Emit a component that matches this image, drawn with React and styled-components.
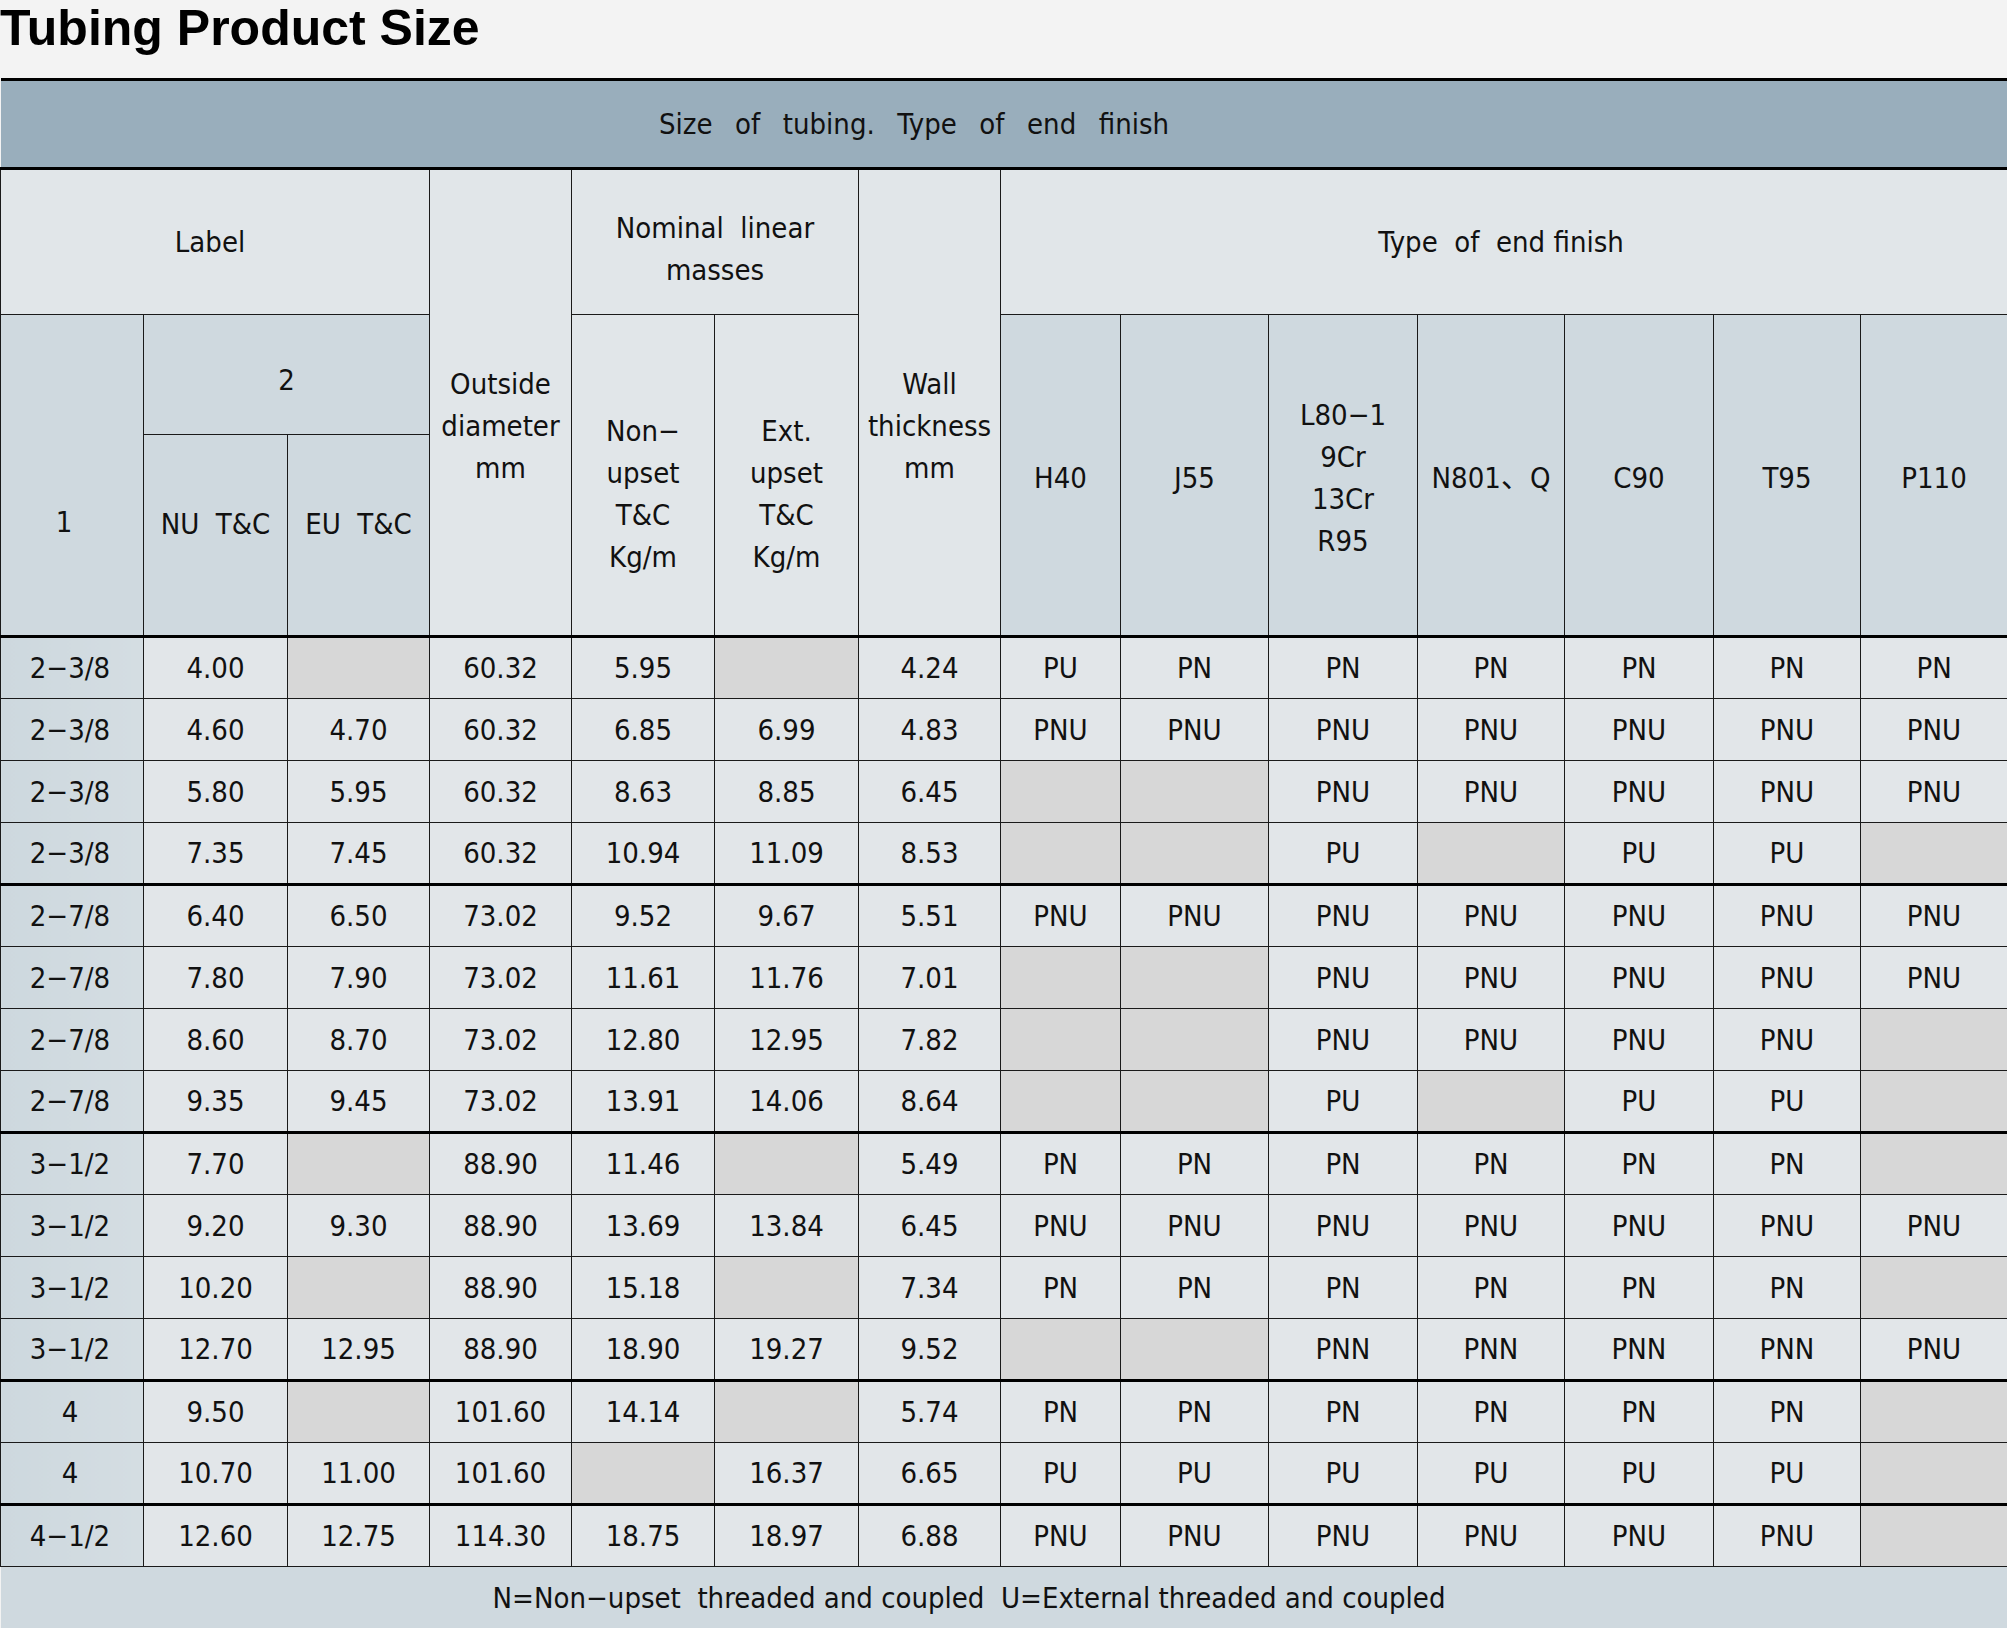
import React from 'react';
import styled, { createGlobalStyle } from 'styled-components';

const GlobalStyle = createGlobalStyle`
  html, body {
    margin: 0;
    padding: 0;
    background: #f3f3f3;
  }
`;

const Page = styled.div`
  width: 2007px;
  font-family: 'Liberation Sans Narrow', 'DejaVu Sans Condensed', 'Liberation Sans', 'Noto Sans CJK SC', sans-serif;
  color: #111;
`;

const Title = styled.h1`
  margin: 0;
  height: 78px;
  padding-top: 3px;
  box-sizing: border-box;
  font-family: 'Liberation Sans Narrow', 'Liberation Sans', sans-serif;
  font-weight: 700;
  font-size: 50px;
  line-height: 51px;
  color: #000;
`;

const Table = styled.table`
  width: 2007px;
  table-layout: fixed;
  border-collapse: collapse;
  font-size: 29px;
  line-height: 42px;
  border-top: 3px solid #000;
`;

const Band = styled.th`
  height: 86px;
  background: #99aebc;
  font-weight: 400;
  white-space: pre;
  word-spacing: 3px;
  padding: 0 180px 0 0;
  border-bottom: 3px solid #000;
`;

const Head = styled.th`
  font-weight: 400;
  white-space: pre;
  padding: ${(p) => p.$pad || '0'};
  vertical-align: ${(p) => p.$valign || 'middle'};
  background: ${(p) => (p.$dark ? '#cfd9df' : '#e1e6e9')};
  border: 1.5px solid #1a1a1a;
  border-bottom: ${(p) => (p.$last ? '3px solid #000' : '1.5px solid #1a1a1a')};
`;

const Row = styled.tr`
  height: 62px;

  td {
    border-bottom: ${(p) => (p.$thick ? '3px solid #000' : '1.5px solid #1a1a1a')};
  }
`;

const Cell = styled.td`
  text-align: center;
  padding: 0;
  border-left: 1.5px solid #1a1a1a;
  border-right: 1.5px solid #1a1a1a;
  background: ${(p) => (p.$empty ? '#d7d7d7' : '#e2e6e9')};
`;

const SizeCell = styled(Cell)`
  padding-right: 4px;
  background: linear-gradient(90deg, #cdd8de 0%, #d4dde2 100%);
`;

const Footer = styled.td`
  height: 62px;
  text-align: center;
  white-space: pre;
  padding: 0 70px 0 0;
  background: #cfd9df;
  border-top: 1.5px solid #1a1a1a;
  border-bottom: 1.5px solid #1a1a1a;
`;

const widths = [143, 144, 142, 142, 143, 144, 142, 120, 148, 149, 147, 149, 147, 147];
const grades = ['H40', 'J55', 'L80−1\n9Cr\n13Cr\nR95', 'N801、Q', 'C90', 'T95', 'P110'];

const rows = [
  ['2−3/8', '4.00', '', '60.32', '5.95', '', '4.24', 'PU', 'PN', 'PN', 'PN', 'PN', 'PN', 'PN'],
  ['2−3/8', '4.60', '4.70', '60.32', '6.85', '6.99', '4.83', 'PNU', 'PNU', 'PNU', 'PNU', 'PNU', 'PNU', 'PNU'],
  ['2−3/8', '5.80', '5.95', '60.32', '8.63', '8.85', '6.45', '', '', 'PNU', 'PNU', 'PNU', 'PNU', 'PNU'],
  ['2−3/8', '7.35', '7.45', '60.32', '10.94', '11.09', '8.53', '', '', 'PU', '', 'PU', 'PU', ''],
  ['2−7/8', '6.40', '6.50', '73.02', '9.52', '9.67', '5.51', 'PNU', 'PNU', 'PNU', 'PNU', 'PNU', 'PNU', 'PNU'],
  ['2−7/8', '7.80', '7.90', '73.02', '11.61', '11.76', '7.01', '', '', 'PNU', 'PNU', 'PNU', 'PNU', 'PNU'],
  ['2−7/8', '8.60', '8.70', '73.02', '12.80', '12.95', '7.82', '', '', 'PNU', 'PNU', 'PNU', 'PNU', ''],
  ['2−7/8', '9.35', '9.45', '73.02', '13.91', '14.06', '8.64', '', '', 'PU', '', 'PU', 'PU', ''],
  ['3−1/2', '7.70', '', '88.90', '11.46', '', '5.49', 'PN', 'PN', 'PN', 'PN', 'PN', 'PN', ''],
  ['3−1/2', '9.20', '9.30', '88.90', '13.69', '13.84', '6.45', 'PNU', 'PNU', 'PNU', 'PNU', 'PNU', 'PNU', 'PNU'],
  ['3−1/2', '10.20', '', '88.90', '15.18', '', '7.34', 'PN', 'PN', 'PN', 'PN', 'PN', 'PN', ''],
  ['3−1/2', '12.70', '12.95', '88.90', '18.90', '19.27', '9.52', '', '', 'PNN', 'PNN', 'PNN', 'PNN', 'PNU'],
  ['4', '9.50', '', '101.60', '14.14', '', '5.74', 'PN', 'PN', 'PN', 'PN', 'PN', 'PN', ''],
  ['4', '10.70', '11.00', '101.60', '', '16.37', '6.65', 'PU', 'PU', 'PU', 'PU', 'PU', 'PU', ''],
  ['4−1/2', '12.60', '12.75', '114.30', '18.75', '18.97', '6.88', 'PNU', 'PNU', 'PNU', 'PNU', 'PNU', 'PNU', ''],
];

// rows after which a heavy rule closes a size group
const groupEnds = [3, 7, 11, 13];

export default function App() {
  return (
    <Page>
      <GlobalStyle />
      <Title>Tubing Product Size</Title>
      <Table>
        <colgroup>
          {widths.map((w, i) => (
            <col key={i} style={{ width: w }} />
          ))}
        </colgroup>
        <thead>
          <tr>
            <Band colSpan={14}>{'Size  of  tubing.  Type  of  end  finish'}</Band>
          </tr>
          <tr style={{ height: 146 }}>
            <Head colSpan={3} $pad="0 10px 0 0">Label</Head>
            <Head rowSpan={3} $last $pad="46px 0 0">{'Outside\ndiameter\nmm'}</Head>
            <Head colSpan={2} $pad="14px 0 0">{'Nominal  linear\nmasses'}</Head>
            <Head rowSpan={3} $last $pad="46px 0 0">{'Wall\nthickness\nmm'}</Head>
            <Head colSpan={7} $pad="0 6px 0 0">{'Type  of  end finish'}</Head>
          </tr>
          <tr style={{ height: 120 }}>
            <Head rowSpan={2} $dark $last $pad="94px 16px 0 0">1</Head>
            <Head colSpan={2} $dark $pad="10px 0 0">2</Head>
            <Head rowSpan={2} $last $pad="38px 0 0">{'Non−\nupset\nT&C\nKg/m'}</Head>
            <Head rowSpan={2} $last $pad="38px 0 0">{'Ext.\nupset\nT&C\nKg/m'}</Head>
            {grades.map((g) => (
              <Head key={g} rowSpan={2} $dark $last $pad="6px 0 0">{g}</Head>
            ))}
          </tr>
          <tr style={{ height: 202 }}>
            <Head $dark $last $pad="0 0 22px">{'NU  T&C'}</Head>
            <Head $dark $last $pad="0 0 22px">{'EU  T&C'}</Head>
          </tr>
        </thead>
        <tbody>
          {rows.map((r, i) => (
            <Row key={i} $thick={groupEnds.includes(i)}>
              <SizeCell>{r[0]}</SizeCell>
              {r.slice(1).map((v, j) => (
                <Cell key={j} $empty={v === ''}>{v}</Cell>
              ))}
            </Row>
          ))}
          <tr>
            <Footer colSpan={14}>
              {'N=Non−upset  threaded and coupled  U=External threaded and coupled'}
            </Footer>
          </tr>
        </tbody>
      </Table>
    </Page>
  );
}
